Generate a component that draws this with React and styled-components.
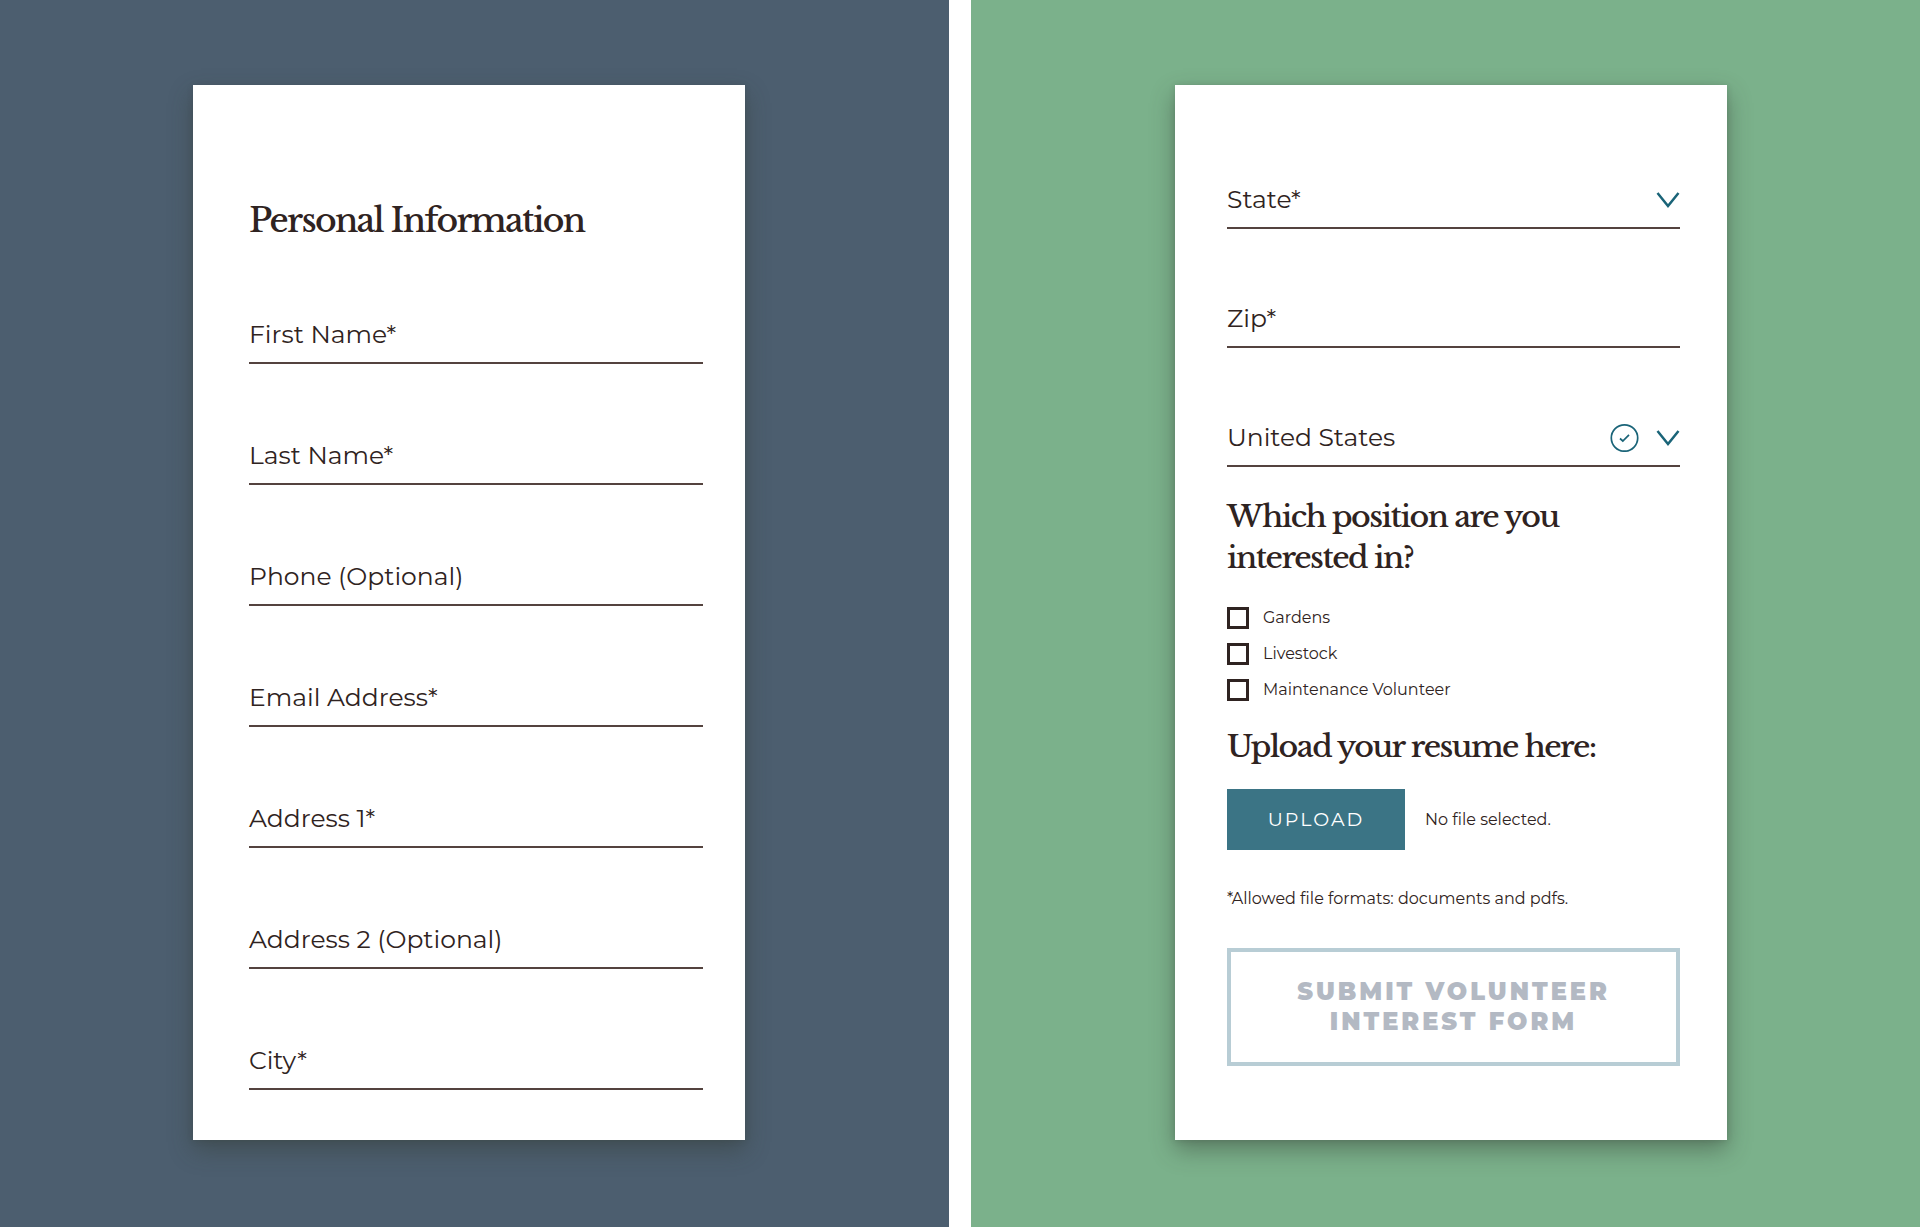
import React, { useRef, useState } from "react";
import styled, { createGlobalStyle } from "styled-components";

const INK = "#2f2321";
const TEAL = "#1a6478";
const SANS = `Montserrat, Inter, "Open Sans", sans-serif`;
const SERIF = `"Libre Baskerville", "Liberation Serif", serif`;

const GlobalStyle = createGlobalStyle`
  *, *::before, *::after { box-sizing: border-box; }
  body { margin: 0; background: #fff; color: ${INK}; font-family: ${SANS}; }
`;

const Page = styled.form`
  display: grid;
  grid-template-columns: repeat(2, minmax(0, 1fr));
  gap: 22px;
  min-height: 100vh;
  @media (max-width: 1100px) { grid-template-columns: minmax(0, 1fr); }
`;

const Panel = styled.section`
  background: ${(p) => p.$color};
  padding: 85px ${(p) => p.$right} 87px ${(p) => p.$left};
  @media (max-width: 1600px) { padding-left: 32px; padding-right: 32px; }
`;

const Card = styled.div`
  background: #fff;
  padding: ${(p) => p.$padding};
  box-shadow: 0 10px 22px rgba(50, 60, 50, 0.45), 0 1px 6px rgba(50, 60, 50, 0.2);
`;

const Title = styled.h1`
  margin: 0 0 73px;
  font: 500 33px/48px ${SERIF};
  letter-spacing: -0.05em;
`;

const Question = styled.h2`
  margin: 0;
  font: 500 30px/41px ${SERIF};
  letter-spacing: -0.05em;
`;

const Fields = styled.div`
  display: flex;
  flex-direction: column;
  gap: ${(p) => p.$gap};
`;

const FieldRow = styled.div`
  display: flex;
  align-items: center;
  gap: 16px;
  padding-bottom: 12px;
  border-bottom: 2px solid #54433f;
`;

const FieldLabel = styled.label`
  font-size: 25px;
  line-height: 32px;
`;

const TextInput = styled.input`
  flex: 1;
  min-width: 0;
  height: 32px;
  padding: 0;
  border: 0;
  outline: 0;
  background: transparent;
  color: inherit;
  font: 400 25px/32px ${SANS};
`;

const Select = styled.select`
  flex: 1;
  min-width: 0;
  height: 32px;
  padding: 0;
  border: 0;
  outline: 0;
  appearance: none;
  background: transparent;
  color: inherit;
  font: 400 25px/32px ${SANS};
`;

const Icon = styled.svg`
  flex: none;
  fill: none;
  stroke: ${TEAL};
  pointer-events: none;
`;

const Group = styled.fieldset`
  min-width: 0;
  margin: 29px 0 25px;
  padding: 0;
  border: 0;
`;

const Options = styled.div`
  display: flex;
  flex-direction: column;
  gap: 14px;
  margin-top: 29px;
`;

const Option = styled.label`
  display: flex;
  align-items: center;
  gap: 14px;
  font-size: 16px;
  line-height: 22px;
`;

const Checkbox = styled.input`
  appearance: none;
  width: 22px;
  height: 22px;
  margin: 0;
  border: 3px solid ${INK};
  background: #fff;
  &:checked { background: ${TEAL}; }
`;

const UploadRow = styled.div`
  display: flex;
  align-items: center;
  gap: 20px;
  margin: 22px 0 37px;
`;

const UploadButton = styled.button`
  width: 178px;
  height: 61px;
  border: 0;
  background: #3b7485;
  color: #fff;
  font: 400 19px/24px ${SANS};
  letter-spacing: 2px;
`;

const Note = styled.p`
  margin: 0;
  font-size: 16px;
  line-height: 24px;
`;

const SubmitButton = styled.button`
  display: block;
  width: 100%;
  margin-top: 37px;
  padding: 25px 48px;
  border: 4px solid #b8cdd5;
  background: #fff;
  color: #b3b9c3;
  font: 900 24px/30px ${SANS};
  letter-spacing: 3px;
`;

function Chevron() {
  return (
    <Icon width="24" height="20" viewBox="0 0 24 20" strokeWidth="2.5" aria-hidden="true">
      <path d="M1.5 4L12 17L22.5 4" />
    </Icon>
  );
}

function CheckCircle() {
  return (
    <Icon width="30" height="30" viewBox="0 0 30 30" strokeWidth="1.7" aria-hidden="true">
      <circle cx="14.5" cy="16" r="13.2" />
      <path d="M10 16.5L12.8 19L19 12.8" />
    </Icon>
  );
}

function TextField({ id, label }) {
  return (
    <FieldRow>
      <FieldLabel htmlFor={id}>{label}</FieldLabel>
      <TextInput id={id} name={id} type="text" />
    </FieldRow>
  );
}

const PERSONAL = [
  ["first-name", "First Name*"],
  ["last-name", "Last Name*"],
  ["phone", "Phone (Optional)"],
  ["email", "Email Address*"],
  ["address-1", "Address 1*"],
  ["address-2", "Address 2 (Optional)"],
  ["city", "City*"],
];

const POSITIONS = ["Gardens", "Livestock", "Maintenance Volunteer"];

export default function App() {
  const picker = useRef(null);
  const [fileName, setFileName] = useState("");

  return (
    <>
      <GlobalStyle />
      <Page onSubmit={(e) => e.preventDefault()}>
        <Panel $color="#4c5e6f" $left="193px" $right="204px">
          <Card $padding="112px 42px 50px 56px">
            <Title>Personal Information</Title>
            <Fields $gap="75px">
              {PERSONAL.map(([id, label]) => (
                <TextField key={id} id={id} label={label} />
              ))}
            </Fields>
          </Card>
        </Panel>

        <Panel $color="#7bb18b" $left="204px" $right="193px">
          <Card $padding="98px 47px 74px 52px">
            <Fields $gap="73px">
              <FieldRow>
                <FieldLabel htmlFor="state">State*</FieldLabel>
                <Select id="state" name="state" defaultValue="">
                  <option value="" />
                  <option value="NY">New York</option>
                </Select>
                <Chevron />
              </FieldRow>
              <TextField id="zip" label="Zip*" />
              <FieldRow>
                <Select id="country" name="country" aria-label="Country">
                  <option>United States</option>
                </Select>
                <CheckCircle />
                <Chevron />
              </FieldRow>
            </Fields>

            <Group aria-labelledby="position-question">
              <Question id="position-question">Which position are you interested in?</Question>
              <Options>
                {POSITIONS.map((name) => (
                  <Option key={name}>
                    <Checkbox type="checkbox" name="position" value={name} />
                    {name}
                  </Option>
                ))}
              </Options>
            </Group>

            <Question>Upload your resume here:</Question>
            <UploadRow>
              <UploadButton type="button" onClick={() => picker.current.click()}>
                UPLOAD
              </UploadButton>
              <input
                ref={picker}
                type="file"
                hidden
                aria-label="Resume"
                onChange={(e) => setFileName(e.target.files[0]?.name ?? "")}
              />
              <Note>{fileName || "No file selected."}</Note>
            </UploadRow>
            <Note>*Allowed file formats: documents and pdfs.</Note>
            <SubmitButton type="submit">SUBMIT VOLUNTEER INTEREST FORM</SubmitButton>
          </Card>
        </Panel>
      </Page>
    </>
  );
}
